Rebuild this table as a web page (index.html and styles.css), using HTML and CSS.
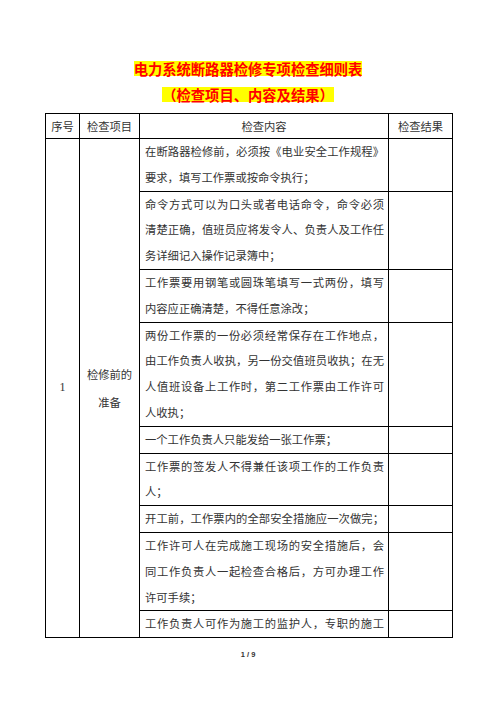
FILE: index.html
```html
<!DOCTYPE html>
<html lang="zh-CN">
<head>
<meta charset="utf-8">
<title>电力系统断路器检修专项检查细则表</title>
<link rel="stylesheet" href="styles.css">
</head>
<body>
<div class="page">
  <div class="title-line"><span class="hl">电力系统断路器检修专项检查细则表</span></div>
  <div class="title-line"><span class="hl">（检查项目、内容及结果）</span></div>
  <table class="sheet">
    <colgroup>
      <col class="c1"><col class="c2"><col class="c3"><col class="c4">
    </colgroup>
    <thead>
      <tr><th>序号</th><th>检查项目</th><th>检查内容</th><th>检查结果</th></tr>
    </thead>
    <tbody>
      <tr>
        <td rowspan="9" class="num">1</td>
        <td rowspan="9" class="item">检修前的<br>准备</td>
        <td class="content"><span class="ln">在断路器检修前，必须按《电业安全工作规程》</span><span class="ln end">要求，填写工作票或按命令执行；</span></td>
        <td></td>
      </tr>
      <tr>
        <td class="content"><span class="ln">命令方式可以为口头或者电话命令，命令必须</span><span class="ln">清楚正确，值班员应将发令人、负责人及工作任</span><span class="ln end">务详细记入操作记录簿中；</span></td>
        <td></td>
      </tr>
      <tr>
        <td class="content"><span class="ln">工作票要用钢笔或圆珠笔填写一式两份，填写</span><span class="ln end">内容应正确清楚，不得任意涂改；</span></td>
        <td></td>
      </tr>
      <tr>
        <td class="content"><span class="ln">两份工作票的一份必须经常保存在工作地点，</span><span class="ln">由工作负责人收执，另一份交值班员收执；在无</span><span class="ln">人值班设备上工作时，第二工作票由工作许可</span><span class="ln end">人收执；</span></td>
        <td></td>
      </tr>
      <tr>
        <td class="content"><span class="ln end">一个工作负责人只能发给一张工作票；</span></td>
        <td></td>
      </tr>
      <tr>
        <td class="content"><span class="ln">工作票的签发人不得兼任该项工作的工作负责</span><span class="ln end">人；</span></td>
        <td></td>
      </tr>
      <tr>
        <td class="content"><span class="ln">开工前，工作票内的全部安全措施应一次做完；</span></td>
        <td></td>
      </tr>
      <tr>
        <td class="content"><span class="ln">工作许可人在完成施工现场的安全措施后，会</span><span class="ln">同工作负责人一起检查合格后，方可办理工作</span><span class="ln end">许可手续；</span></td>
        <td></td>
      </tr>
      <tr>
        <td class="content"><span class="ln">工作负责人可作为施工的监护人，专职的施工</span></td>
        <td></td>
      </tr>
    </tbody>
  </table>
  <div class="pager">1 / 9</div>
</div>
</body>
</html>
```
FILE: styles.css
```css
body {
  margin: 0;
  background: #ffffff;
  font-family: "Noto Sans CJK SC", "Noto Sans", sans-serif;
  color: #333333;
}

.page {
  width: 496px;
  padding-top: 55px;
}

.title-line {
  height: 26px;
  display: flex;
  justify-content: center;
  align-items: center;
}

.hl {
  display: inline-block;
  line-height: 15px;
  font-size: 14.3px;
  font-weight: bold;
  color: #ff0000;
  background: #ffff00;
}

.sheet {
  margin: 6px 0 0 45px;
  width: 407px;
  border-collapse: collapse;
  table-layout: fixed;
  font-size: 11.3px;
}

.c1 { width: 34px; }
.c2 { width: 60px; }
.c3 { width: 249px; }
.c4 { width: 64px; }

.sheet th,
.sheet td {
  border: 1px solid #000000;
  padding: 0;
}

.sheet th {
  font-weight: normal;
  line-height: 24px;
  text-align: center;
}

.sheet td {
  line-height: 25.8px;
  vertical-align: middle;
}

.sheet td.content {
  padding: 0 4px 0 5px;
}

.num {
  text-align: center;
  font-family: "Liberation Serif", serif;
  font-size: 12px;
}

.sheet td.item {
  text-align: center;
  line-height: 28px;
}

.ln {
  display: block;
  text-align: justify;
  text-align-last: justify;
}

.ln.end {
  text-align-last: left;
}

.pager {
  margin-top: 12px;
  text-align: center;
  font-family: "Liberation Sans", sans-serif;
  font-size: 7.5px;
  font-weight: bold;
  line-height: 10px;
  color: #333333;
}
```
